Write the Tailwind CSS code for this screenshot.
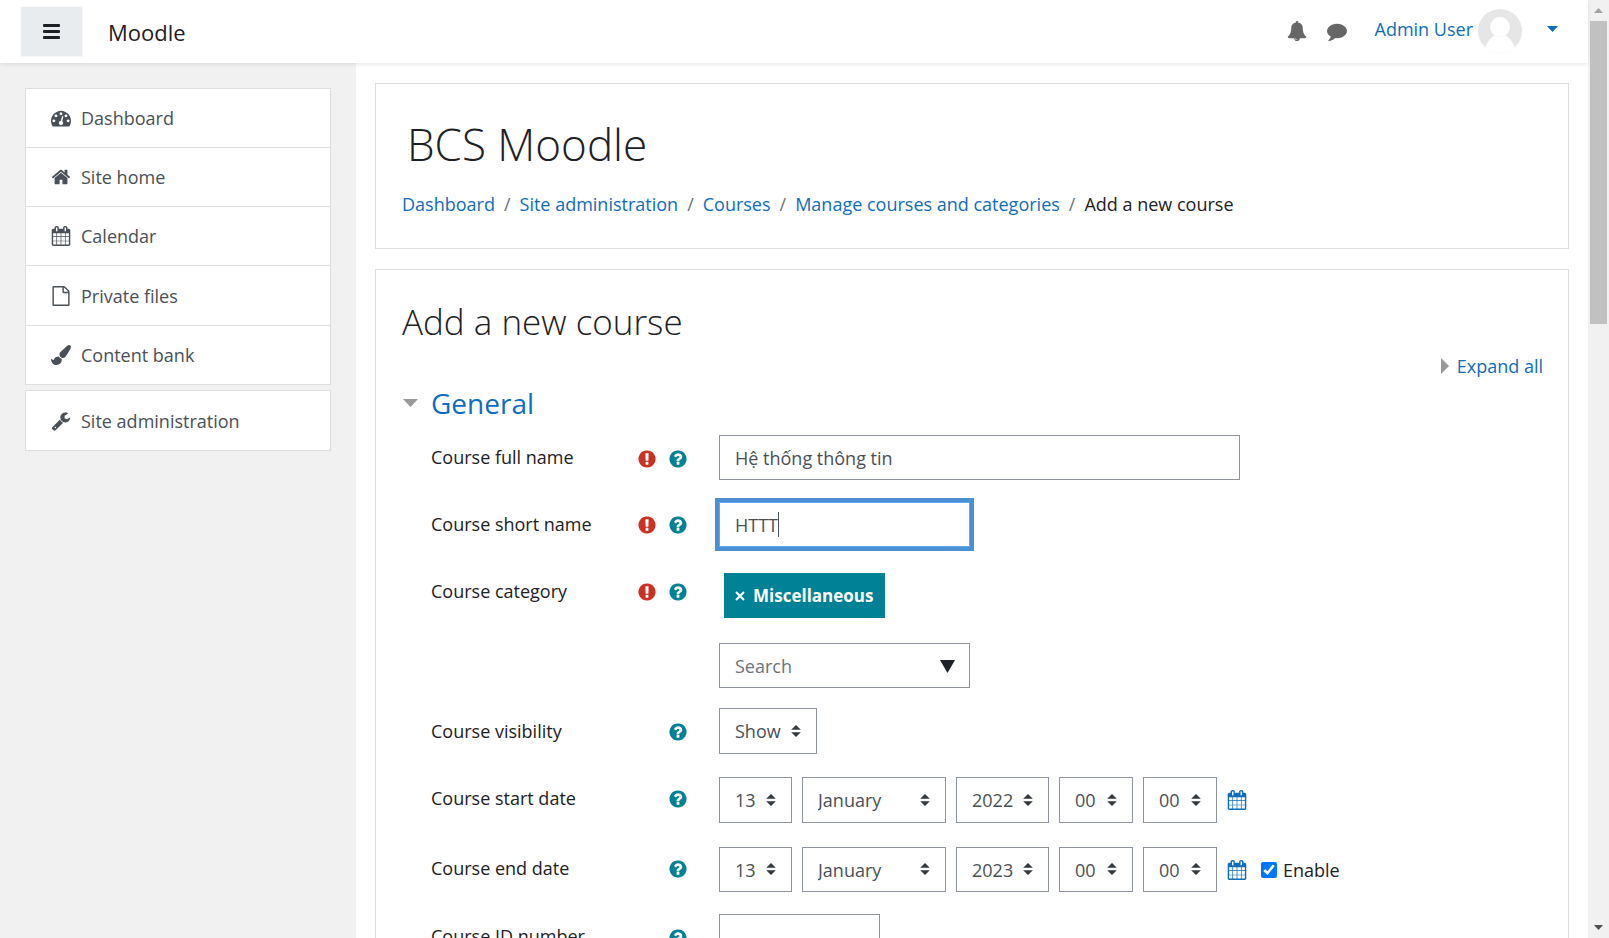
<!DOCTYPE html>
<html lang="en">
<head>
<meta charset="utf-8">
<title>Moodle: Add a new course</title>
<script src="https://cdn.jsdelivr.net/npm/@tailwindcss/browser@4"></script>
</head>
<body class="flex h-screen overflow-hidden bg-white font-['Open_Sans','Noto_Sans',sans-serif] text-[18px] leading-7 text-[#1d2125]">
<svg class="hidden" aria-hidden="true">
  <symbol id="dash" viewBox="0 0 1792 1792"><path d="M384 1152q0-53-37.5-90.5t-90.5-37.5-90.5 37.5-37.5 90.5 37.5 90.5 90.5 37.5 90.5-37.5 37.5-90.5zm192-448q0-53-37.5-90.5t-90.5-37.5-90.5 37.5-37.5 90.5 37.5 90.5 90.5 37.5 90.5-37.5 37.5-90.5zm428 481l101-382q6-26-7.5-48.5t-38.5-29.5-48 6.5-30 39.5l-101 382q-60 5-107 43.5t-63 98.5q-20 77 20 146t117 89 146-20 89-117q16-60-6-117t-72-91zm660-33q0-53-37.5-90.5t-90.5-37.5-90.5 37.5-37.5 90.5 37.5 90.5 90.5 37.5 90.5-37.5 37.5-90.5zm-640-640q0-53-37.5-90.5t-90.5-37.5-90.5 37.5-37.5 90.5 37.5 90.5 90.5 37.5 90.5-37.5 37.5-90.5zm448 192q0-53-37.5-90.5t-90.5-37.5-90.5 37.5-37.5 90.5 37.5 90.5 90.5 37.5 90.5-37.5 37.5-90.5zm320 448q0 261-141 483-19 29-54 29h-1402q-35 0-54-29-141-221-141-483 0-182 71-348t191-286 286-191 348-71 348 71 286 191 191 286 71 348z"/></symbol>
  <symbol id="home" viewBox="0 0 1792 1792"><path d="M1472 992v480q0 26-19 45t-45 19h-384v-384h-256v384h-384q-26 0-45-19t-19-45v-480q0-1 .5-3t.5-3l575-474 575 474q1 2 1 6zm223-69l-62 74q-8 9-21 11h-3q-13 0-21-7l-692-577-692 577q-12 8-24 7-13-2-21-11l-62-74q-8-10-7-23.5t11-21.5l719-599q32-26 76-26t76 26l244 204v-195q0-14 9-23t23-9h192q14 0 23 9t9 23v408l219 182q10 8 11 21.5t-7 23.5z"/></symbol>
  <symbol id="calendar" viewBox="0 0 1792 1792"><path d="M192 1664h288v-288h-288v288zm352 0h320v-288h-320v288zm-352-352h288v-320h-288v320zm352 0h320v-320h-320v320zm-352-384h288v-288h-288v288zm736 736h320v-288h-320v288zm-384-736h320v-288h-320v288zm768 736h288v-288h-288v288zm-384-352h320v-320h-320v320zm-352-864v-288q0-13-9.5-22.5t-22.5-9.5h-64q-13 0-22.5 9.5t-9.5 22.5v288q0 13 9.5 22.5t22.5 9.5h64q13 0 22.5-9.5t9.5-22.5zm736 864h288v-320h-288v320zm-384-384h320v-288h-320v288zm384 0h288v-288h-288v288zm32-480v-288q0-13-9.5-22.5t-22.5-9.5h-64q-13 0-22.5 9.5t-9.5 22.5v288q0 13 9.5 22.5t22.5 9.5h64q13 0 22.5-9.5t9.5-22.5zm384-64v1280q0 52-38 90t-90 38h-1408q-52 0-90-38t-38-90v-1280q0-52 38-90t90-38h128v-96q0-66 47-113t113-47h64q66 0 113 47t47 113v96h384v-96q0-66 47-113t113-47h64q66 0 113 47t47 113v96h128q52 0 90 38t38 90z"/></symbol>
  <symbol id="file" viewBox="0 0 1792 1792"><path d="M1596 380q28 28 48 76t20 88v1152q0 40-28 68t-68 28h-1344q-40 0-68-28t-28-68v-1600q0-40 28-68t68-28h896q40 0 88 20t76 48zm-444-244v376h376q-10-29-22-41l-313-313q-12-12-41-22zm384 1528v-1024h-416q-40 0-68-28t-28-68v-416h-768v1536h1280z"/></symbol>
  <symbol id="brush" viewBox="0 0 1792 1792"><path d="M1615 0q70 0 122.5 46.5t52.5 116.5q0 63-45 151-332 629-465 752-97 91-218 91-126 0-216.5-92.5t-90.5-219.5q0-128 92-212l638-579q59-54 130-54zm-909 1034q39 76 106.5 130t150.5 76l1 71q4 213-129.5 347t-348.5 134q-123 0-218-46.5t-152.5-127.5-86.5-183-29-220q7 5 41 30t62 44.5 59 36.500 46 17q41 0 55-37 25-66 57.5-112.5t69.5-76 88-47.5 103-25.5 125-10.5z"/></symbol>
  <symbol id="wrench" viewBox="0 0 1792 1792"><path d="M448 1472q0-26-19-45t-45-19-45 19-19 45 19 45 45 19 45-19 19-45zm644-420l-682 682q-37 37-90 37-52 0-91-37l-106-108q-38-36-38-90 0-53 38-91l681-681q39 98 114.5 173.5t173.5 114.5zm634-435q0 39-23 106-47 134-164.5 217.5t-258.5 83.5q-185 0-316.5-131.5t-131.5-316.5 131.5-316.5 316.5-131.5q58 0 121.5 16.5t107.5 46.5q16 11 16 28t-16 28l-293 169v224l193 107q5-3 79-48.5t135.5-81 70.5-35.5q15 0 23.5 10t8.5 25z"/></symbol>
  <symbol id="bell" viewBox="0 0 1792 1792"><path d="M912 1696q0-16-16-16-59 0-101.5-42.5t-42.5-101.5q0-16-16-16t-16 16q0 73 51.5 124.5t124.5 51.5q16 0 16-16zm816-288q0 52-38 90t-90 38h-448q0 106-75 181t-181 75-181-75-75-181h-448q-52 0-90-38t-38-90q50-42 91-88t85-119.5 74.5-158.5 50-206 19.5-260q0-152 117-282.5t307-158.5q-8-19-8-39 0-40 28-68t68-28 68 28 28 68q0 20-8 39 190 28 307 158.5t117 282.5q0 139 19.5 260t50 206 74.5 158.5 85 119.5 91 88z"/></symbol>
  <symbol id="comment" viewBox="0 0 1792 1792"><path d="M1792 896q0 174-120 321.5t-326 233-450 85.5q-70 0-145-8-198 175-460 242-49 14-114 22-17 2-30.5-9t-17.5-29v-1q-3-4-.5-12t2-10 4.5-9.5l6-9 7-8.5 8-9q7-8 31-34.5t34.5-38 31-39.5 32.5-51 27-59 26-76q-157-89-247.5-220t-90.5-281q0-174 120-321.5t326-233 450-85.5 450 85.5 326 233 120 321.5z"/></symbol>
  <symbol id="help" viewBox="0 0 1792 1792"><path d="M1024 1376v-192q0-14-9-23t-23-9h-192q-14 0-23 9t-9 23v192q0 14 9 23t23 9h192q14 0 23-9t9-23zm256-672q0-88-55.5-163t-138.5-116-170-41q-243 0-371 213-15 24 8 42l132 100q7 6 19 6 16 0 25-12 53-68 86-92 34-24 86-24 48 0 85.5 26t37.5 59q0 38-20 61t-68 45q-63 28-115.5 86.5t-52.5 125.5v36q0 14 9 23t23 9h192q14 0 23-9t9-23q0-19 21.5-49.5t54.5-49.5q32-18 49-28.5t46-35 44.5-48 28-60.5 12.5-81zm384 192q0 209-103 385.5t-279.5 279.5-385.5 103-385.5-103-279.5-279.5-103-385.5 103-385.5 279.5-279.5 385.5-103 385.5 103 279.5 279.5 103 385.5z"/></symbol>
  <symbol id="required" viewBox="0 0 1792 1792"><path d="M896 128q209 0 385.5 103t279.5 279.5 103 385.5-103 385.5-279.5 279.5-385.5 103-385.5-103-279.5-279.5-103-385.5 103-385.5 279.5-279.5 385.5-103zm128 1247v-190q0-14-9-23.5t-22-9.5h-192q-13 0-23 10t-10 23v190q0 13 10 23t23 10h192q13 0 22-9.5t9-23.5zm-2-344l18-621q0-12-10-18-10-8-24-8h-220q-14 0-24 8-10 6-10 18l17 621q0 10 10 17.5t24 7.5h185q14 0 23.5-7.5t10.5-17.5z"/></symbol>
  <symbol id="updown" viewBox="0 0 4 5"><path d="M2 0L0 2h4zm0 5L0 3h4z"/></symbol>
</svg>

<div class="flex min-w-0 flex-1 flex-col">
  <header class="z-10 flex h-[63px] shrink-0 items-center bg-white pr-[30px] pl-5 shadow-[0_2px_4px_rgba(0,0,0,0.08)]">
    <button type="button" aria-label="Side panel" class="flex h-[51px] w-[63px] items-center justify-center border border-[#f8f9fa] bg-[#e9ecef]">
      <svg class="h-[15px] w-[17px]" viewBox="0 0 17 15" fill="#1d2125"><rect width="17" height="3" rx="1"/><rect y="6" width="17" height="3" rx="1"/><rect y="12" width="17" height="3" rx="1"/></svg>
    </button>
    <a href="#" class="ml-[25px] text-[22px]">Moodle</a>
    <nav class="ml-auto flex items-center text-[#0f6cbf]">
      <button type="button" aria-label="Notifications" class="mr-5 pb-0.5"><svg class="size-5 fill-[#666]"><use href="#bell"/></svg></button>
      <button type="button" aria-label="Messages" class="mr-7 pb-0.5"><svg class="size-5 fill-[#666]"><use href="#comment"/></svg></button>
      <button type="button" class="flex items-center pb-0.5">
        <span class="pb-1">Admin User</span>
        <svg class="ml-[5px] size-11" viewBox="0 0 44 44"><defs><clipPath id="disc"><circle cx="22" cy="22" r="22"/></clipPath></defs><g clip-path="url(#disc)"><rect width="44" height="44" fill="#e6e6e6"/><circle cx="22" cy="18" r="10" fill="#fff"/><path d="M7 39Q10 30 17 26Q22 30 27 26Q34 30 37 39L37 44H7Z" fill="#fff"/></g></svg>
        <svg class="mb-1 ml-[25px] h-1.5 w-[11px] fill-current" viewBox="0 0 11 6"><path d="M0 0h11L5.500 6z"/></svg>
      </button>
    </nav>
  </header>

  <div class="flex min-h-0 flex-1">
    <aside class="w-[356px] shrink-0 bg-[#f1f1f1] px-[25px] pt-[25px] text-[#495057]">
      <ul class="divide-y divide-[#dedede] border border-[#dedede] bg-white">
        <li><a href="#" class="flex h-[58px] items-center gap-2.5 px-[25px]"><svg class="size-5 fill-current"><use href="#dash"/></svg>Dashboard</a></li>
        <li><a href="#" class="flex h-[58px] items-center gap-2.5 px-[25px]"><svg class="size-5 fill-current"><use href="#home"/></svg>Site home</a></li>
        <li><a href="#" class="flex h-[58px] items-center gap-2.5 px-[25px]"><svg class="size-5 fill-current"><use href="#calendar"/></svg>Calendar</a></li>
        <li><a href="#" class="flex h-[59px] items-center gap-2.5 px-[25px]"><svg class="size-5 fill-current"><use href="#file"/></svg>Private files</a></li>
        <li><a href="#" class="flex h-[58px] items-center gap-2.5 px-[25px]"><svg class="size-5 fill-current"><use href="#brush"/></svg>Content bank</a></li>
      </ul>
      <ul class="mt-[5px] border border-[#dedede] bg-white">
        <li><a href="#" class="flex h-[59px] items-center gap-2.5 px-[25px]"><svg class="size-5 fill-current"><use href="#wrench"/></svg>Site administration</a></li>
      </ul>
    </aside>

    <main class="min-w-0 flex-1 px-[19px] pt-5">
      <section class="border border-[#dedede] px-[26px] py-[30px]">
        <h1 class="pl-[5px] text-[44px] leading-[60px] font-light">BCS Moodle</h1>
        <nav aria-label="Breadcrumb" class="mt-4">
          <ol class="flex gap-[9px]">
            <li><a href="#" class="text-[#0f6cbf]">Dashboard</a></li><li class="text-[#6a737b]">/</li>
            <li><a href="#" class="text-[#0f6cbf]">Site administration</a></li><li class="text-[#6a737b]">/</li>
            <li><a href="#" class="text-[#0f6cbf]">Courses</a></li><li class="text-[#6a737b]">/</li>
            <li><a href="#" class="text-[#0f6cbf]">Manage courses and categories</a></li><li class="text-[#6a737b]">/</li>
            <li>Add a new course</li>
          </ol>
        </nav>
      </section>

      <section class="mt-5 border border-[#dedede] pt-[26px] pr-[25px] pl-[26px]">
        <h2 class="text-[35px] leading-[52px] font-light">Add a new course</h2>
        <div class="mt-1 flex justify-end">
          <a href="#" class="flex items-center gap-2 text-[#0f6cbf]"><svg class="h-4 w-2 fill-[#999]" viewBox="0 0 8 16"><path d="M0 0L8 8L0 16z"/></svg>Expand all</a>
        </div>
        <form class="pt-[5px]">
          <fieldset>
            <legend class="mb-3.5"><a href="#" class="flex items-center gap-[13px] pl-px text-[28px] leading-9 text-[#0f6cbf]"><svg class="h-2 w-[15px] fill-[#999]" viewBox="0 0 15 8"><path d="M0 0h15L7.500 8z"/></svg>General</a></legend>
            <div class="space-y-[22px] pl-[29px]">

              <div class="flex">
                <div class="flex w-72 shrink-0 items-start pt-2 pr-[31px]">
                  <label for="fullname" class="flex-1">Course full name</label>
                  <span class="flex gap-[11px] pt-1.5"><svg class="size-5 fill-[#ca3120]"><use href="#required"/></svg><button type="button" aria-label="Help with course full name"><svg class="size-5 fill-[#008196]"><use href="#help"/></svg></button></span>
                </div>
                <input id="fullname" type="text" value="Hệ thống thông tin" class="h-[45px] w-[521px] border border-[#8f959e] px-[15px] text-[#495057] outline-none">
              </div>

              <div class="flex">
                <div class="flex w-72 shrink-0 items-start pt-2 pr-[31px]">
                  <label for="shortname" class="flex-1">Course short name</label>
                  <span class="flex gap-[11px] pt-[5px]"><svg class="size-5 fill-[#ca3120]"><use href="#required"/></svg><button type="button" aria-label="Help with course short name"><svg class="size-5 fill-[#008196]"><use href="#help"/></svg></button></span>
                </div>
                <div class="relative">
                  <input id="shortname" type="text" value="HTTT" class="h-[45px] w-[251px] border border-[#5babf2] px-[15px] text-[#495057] ring-4 ring-[#4a90d2] outline-none">
                  <span class="absolute top-2.5 left-[59px] h-[25px] w-px bg-[#495057]"></span>
                </div>
              </div>

              <div class="flex">
                <div class="flex w-72 shrink-0 items-start pt-2 pr-[31px]">
                  <label for="category" class="flex-1">Course category</label>
                  <span class="flex gap-[11px] pt-[5px]"><svg class="size-5 fill-[#ca3120]"><use href="#required"/></svg><button type="button" aria-label="Help with course category"><svg class="size-5 fill-[#008196]"><use href="#help"/></svg></button></span>
                </div>
                <div class="pt-1">
                  <button type="button" class="ml-[5px] flex h-[45px] items-center gap-2 bg-[#008196] pr-3 pl-[11px] text-[17px] font-bold text-white"><svg class="size-2.5 stroke-white stroke-2" viewBox="0 0 10 10"><path d="M1 1L9 9M9 1L1 9"/></svg>Miscellaneous</button>
                  <div class="relative mt-[25px] w-[251px]">
                    <input id="category" type="text" placeholder="Search" class="h-[45px] w-full border border-[#8f959e] px-[15px] text-[#495057] placeholder-[#6a737b] outline-none">
                    <svg class="pointer-events-none absolute top-[17px] right-[15px] h-[13px] w-[15px] fill-[#1d2125]" viewBox="0 0 15 13"><path d="M0 0h15L7.500 13z"/></svg>
                  </div>
                </div>
              </div>

              <div class="-mt-0.5 flex">
                <div class="flex w-72 shrink-0 items-start pt-[9px] pr-[31px]">
                  <label for="visible" class="flex-1">Course visibility</label>
                  <button type="button" aria-label="Help with course visibility" class="pt-[5px]"><svg class="size-5 fill-[#008196]"><use href="#help"/></svg></button>
                </div>
                <div class="relative"><select id="visible" class="h-[46px] w-[98px] appearance-none border border-[#8f959e] pl-[15px] text-[#495057]"><option>Show</option><option>Hide</option></select><svg class="pointer-events-none absolute top-[17px] right-4 h-3 w-2.5 fill-[#343a40]"><use href="#updown"/></svg></div>
              </div>

              <div class="flex">
                <div class="flex w-72 shrink-0 items-start pt-2 pr-[31px]">
                  <label for="startday" class="flex-1">Course start date</label>
                  <button type="button" aria-label="Help with course start date" class="pt-[5px]"><svg class="size-5 fill-[#008196]"><use href="#help"/></svg></button>
                </div>
                <div class="flex items-center gap-2.5 pt-px text-[#495057]">
                  <div class="relative"><select id="startday" class="h-[46px] w-[73px] appearance-none border border-[#8f959e] pl-[15px]"><option>13</option></select><svg class="pointer-events-none absolute top-[17px] right-4 h-3 w-2.5 fill-[#343a40]"><use href="#updown"/></svg></div>
                  <div class="relative"><select aria-label="Start month" class="h-[46px] w-36 appearance-none border border-[#8f959e] pl-[15px]"><option>January</option></select><svg class="pointer-events-none absolute top-[17px] right-4 h-3 w-2.5 fill-[#343a40]"><use href="#updown"/></svg></div>
                  <div class="relative"><select aria-label="Start year" class="h-[46px] w-[93px] appearance-none border border-[#8f959e] pl-[15px]"><option>2022</option></select><svg class="pointer-events-none absolute top-[17px] right-4 h-3 w-2.5 fill-[#343a40]"><use href="#updown"/></svg></div>
                  <div class="relative"><select aria-label="Start hour" class="h-[46px] w-[74px] appearance-none border border-[#8f959e] pl-[15px]"><option>00</option></select><svg class="pointer-events-none absolute top-[17px] right-4 h-3 w-2.5 fill-[#343a40]"><use href="#updown"/></svg></div>
                  <div class="relative"><select aria-label="Start minute" class="h-[46px] w-[74px] appearance-none border border-[#8f959e] pl-[15px]"><option>00</option></select><svg class="pointer-events-none absolute top-[17px] right-4 h-3 w-2.5 fill-[#343a40]"><use href="#updown"/></svg></div>
                  <button type="button" aria-label="Start date calendar"><svg class="size-5 fill-[#0f6cbf]"><use href="#calendar"/></svg></button>
                </div>
              </div>

              <div class="flex">
                <div class="flex w-72 shrink-0 items-start pt-[9px] pr-[31px]">
                  <label for="endday" class="flex-1">Course end date</label>
                  <button type="button" aria-label="Help with course end date" class="pt-[5px]"><svg class="size-5 fill-[#008196]"><use href="#help"/></svg></button>
                </div>
                <div class="flex items-center gap-2.5 pt-0.5 text-[#495057]">
                  <div class="relative"><select id="endday" class="h-[45px] w-[73px] appearance-none border border-[#8f959e] pl-[15px]"><option>13</option></select><svg class="pointer-events-none absolute top-4 right-4 h-3 w-2.5 fill-[#343a40]"><use href="#updown"/></svg></div>
                  <div class="relative"><select aria-label="End month" class="h-[45px] w-36 appearance-none border border-[#8f959e] pl-[15px]"><option>January</option></select><svg class="pointer-events-none absolute top-4 right-4 h-3 w-2.5 fill-[#343a40]"><use href="#updown"/></svg></div>
                  <div class="relative"><select aria-label="End year" class="h-[45px] w-[93px] appearance-none border border-[#8f959e] pl-[15px]"><option>2023</option></select><svg class="pointer-events-none absolute top-4 right-4 h-3 w-2.5 fill-[#343a40]"><use href="#updown"/></svg></div>
                  <div class="relative"><select aria-label="End hour" class="h-[45px] w-[74px] appearance-none border border-[#8f959e] pl-[15px]"><option>00</option></select><svg class="pointer-events-none absolute top-4 right-4 h-3 w-2.5 fill-[#343a40]"><use href="#updown"/></svg></div>
                  <div class="relative"><select aria-label="End minute" class="h-[45px] w-[74px] appearance-none border border-[#8f959e] pl-[15px]"><option>00</option></select><svg class="pointer-events-none absolute top-4 right-4 h-3 w-2.5 fill-[#343a40]"><use href="#updown"/></svg></div>
                  <button type="button" aria-label="End date calendar"><svg class="size-5 fill-[#0f6cbf]"><use href="#calendar"/></svg></button>
                  <label class="ml-1 flex items-center gap-1.5 text-[#1d2125]"><input type="checkbox" checked class="size-4 accent-[#0075ff]">Enable</label>
                </div>
              </div>

              <div class="flex">
                <div class="flex w-72 shrink-0 items-start pt-2 pr-[31px]">
                  <label for="idnumber" class="flex-1">Course ID number</label>
                  <button type="button" aria-label="Help with course ID number" class="pt-1.5"><svg class="size-5 fill-[#008196]"><use href="#help"/></svg></button>
                </div>
                <input id="idnumber" type="text" class="h-[45px] w-[161px] border border-[#8f959e] px-[15px] text-[#495057] outline-none">
              </div>
            </div>
          </fieldset>
        </form>
      </section>
    </main>
  </div>
</div>

<!-- Scroll track -->
<div class="flex w-[21px] shrink-0 flex-col items-center bg-[#f1f1f1]" aria-hidden="true">
  <div class="flex h-[21px] items-center"><svg class="h-[5px] w-[9px] fill-[#a3a3a3]" viewBox="0 0 9 5"><path d="M0 5h9L4.500 0z"/></svg></div>
  <div class="h-[303px] w-[17px] bg-[#c1c1c1]"></div>
  <div class="mt-auto flex h-[21px] items-center"><svg class="h-[5px] w-[9px] fill-[#505050]" viewBox="0 0 9 5"><path d="M0 0h9L4.500 5z"/></svg></div>
</div>
</body>
</html>
